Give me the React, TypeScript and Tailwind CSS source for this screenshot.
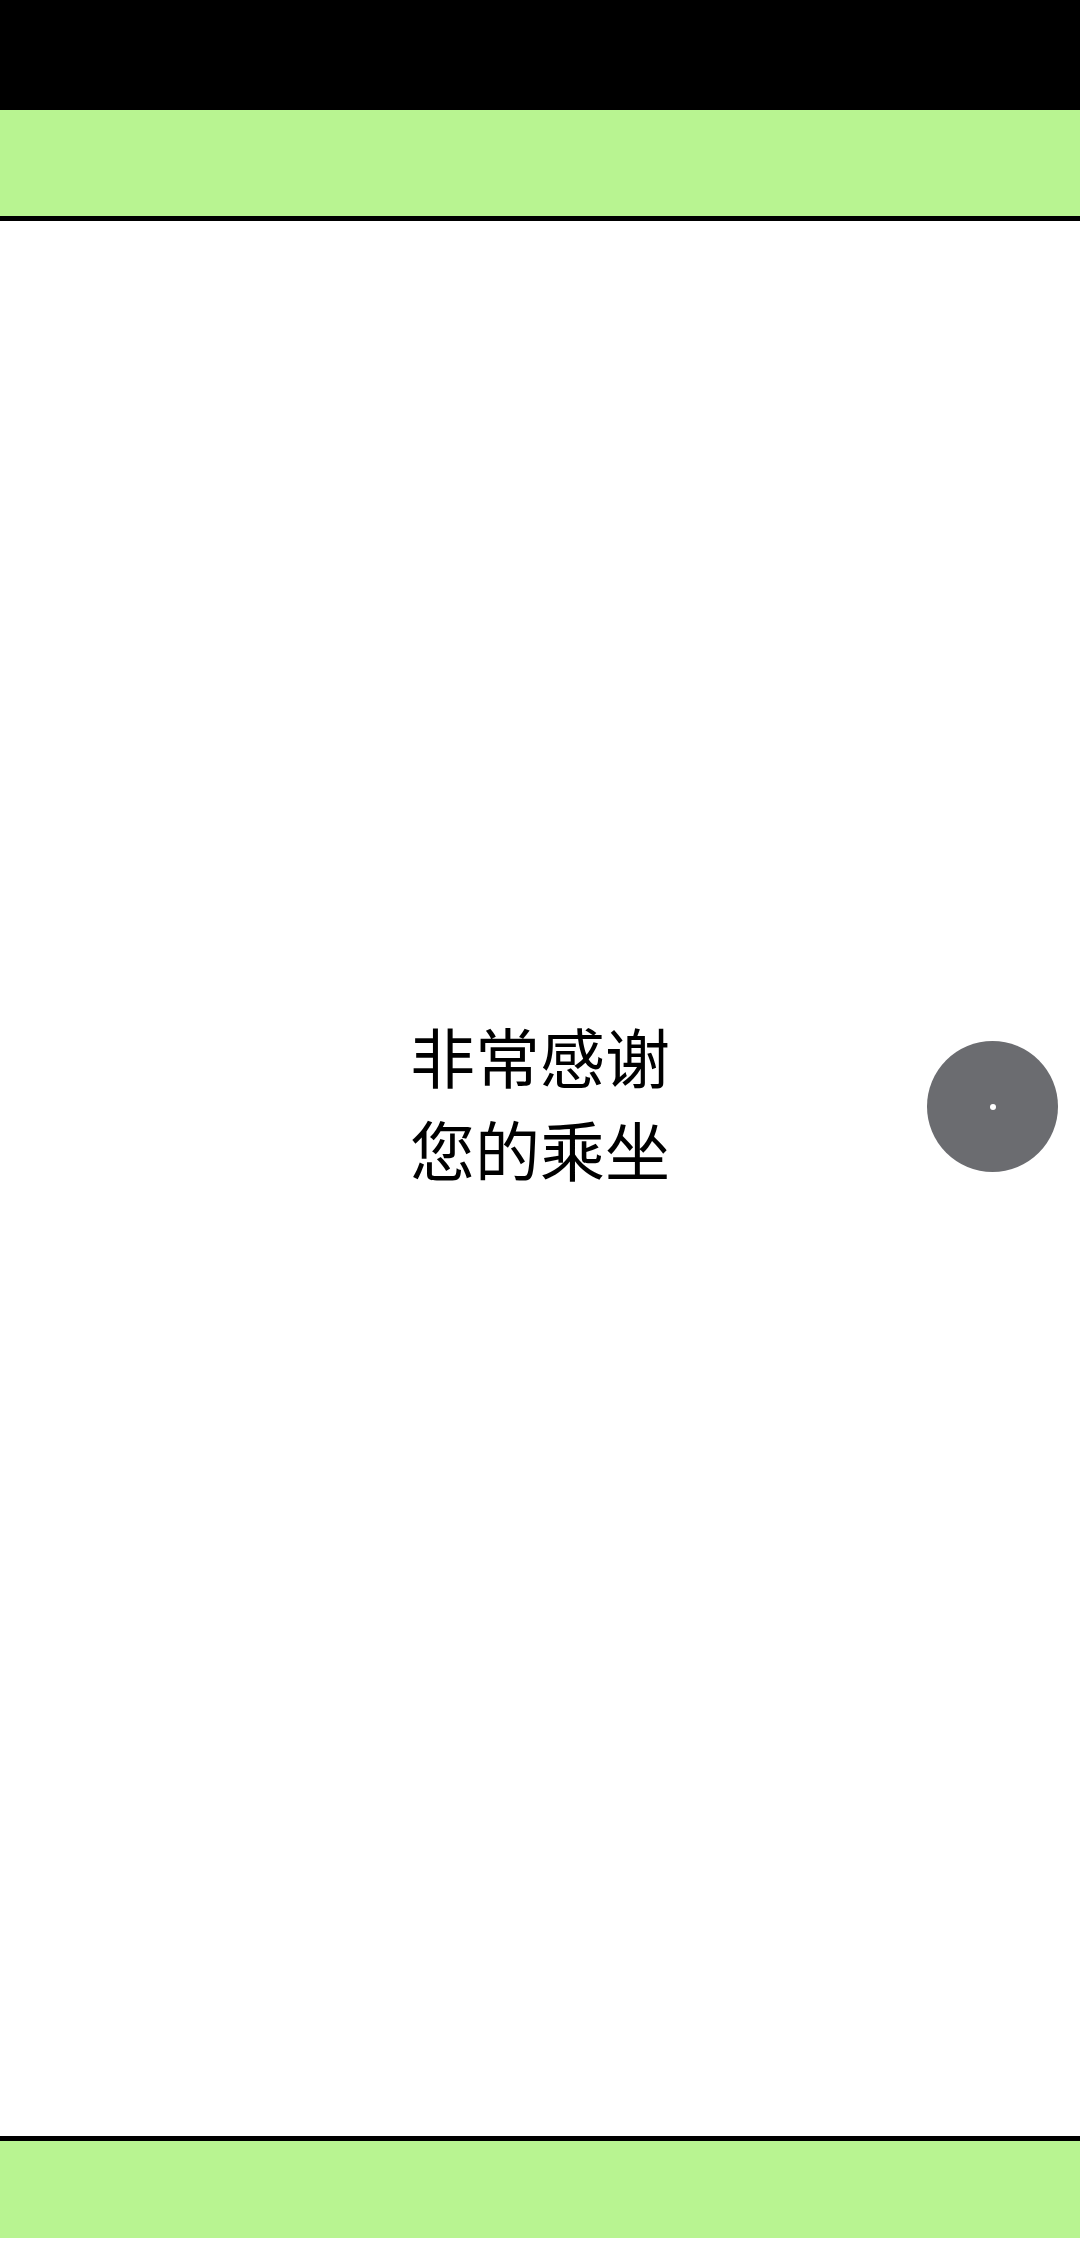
import React from "react"

const ThankYouPage: React.FC = () => {
  return (
    <div className="flex h-[2248px] w-[1080px] flex-col bg-white font-['Noto_Sans_CJK_SC',sans-serif]">
      <div className="h-[110px] bg-black" />
      <div className="h-[111px] border-b-[5px] border-black bg-[#b8f491]" />
      <main className="relative flex-1">
        <div className="flex flex-col items-center pt-[788px] text-[65px] leading-[93px] text-black">
          <p>非常感谢</p>
          <p>您的乘坐</p>
        </div>
        <button
          type="button"
          className="absolute right-[22px] top-[820px] flex h-[131px] w-[131px] items-center justify-center rounded-full bg-[#6b6c70]"
        >
          <span className="h-[6px] w-[6px] rounded-full bg-white" />
        </button>
      </main>
      <div className="h-[102px] border-t-[5px] border-black bg-[#b8f491]" />
      <div className="h-[10px] bg-white" />
    </div>
  )
}

export default ThankYouPage
